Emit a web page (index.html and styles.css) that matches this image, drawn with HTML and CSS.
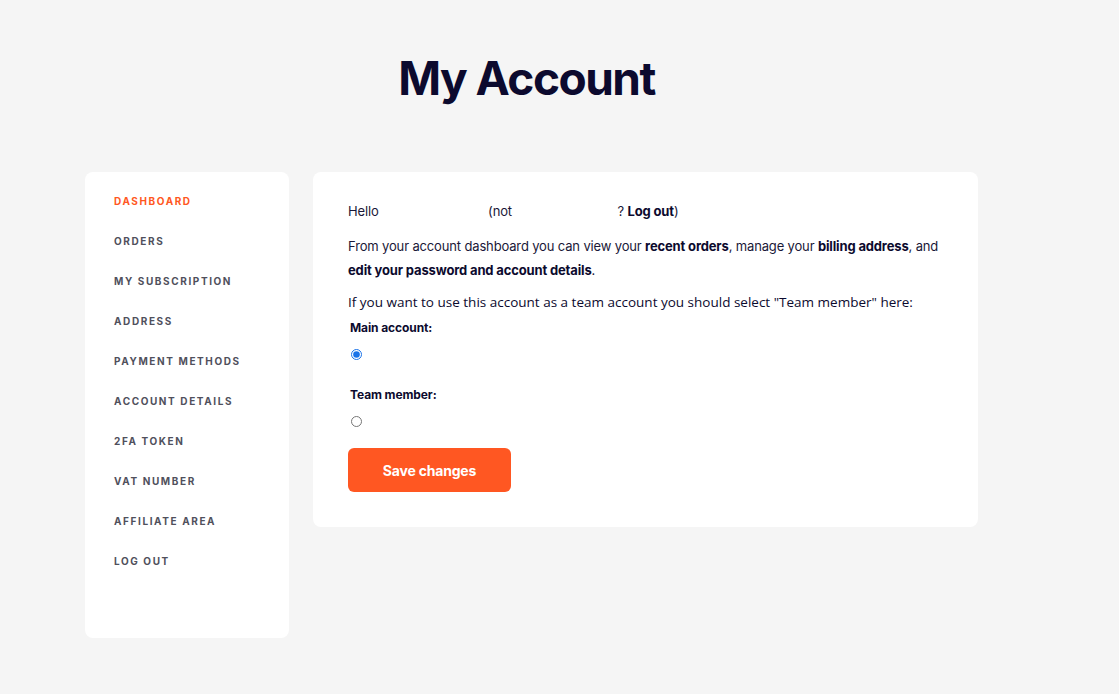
FILE: index.html
```html
<!DOCTYPE html>
<html lang="en">
<head>
<meta charset="utf-8">
<title>My Account</title>
<link rel="stylesheet" href="styles.css">
</head>
<body>
<div class="page">
  <h1 class="title">My Account</h1>
  <div class="layout">
    <nav class="sidebar">
      <a class="nav-item active" href="#">Dashboard</a>
      <a class="nav-item" href="#">Orders</a>
      <a class="nav-item" href="#">My Subscription</a>
      <a class="nav-item" href="#">Address</a>
      <a class="nav-item" href="#">Payment Methods</a>
      <a class="nav-item" href="#">Account Details</a>
      <a class="nav-item" href="#">2FA Token</a>
      <a class="nav-item" href="#">VAT Number</a>
      <a class="nav-item" href="#">Affiliate Area</a>
      <a class="nav-item" href="#">Log Out</a>
    </nav>
    <main class="content">
      <p class="hello">Hello <span class="blank-a"></span>(not <span class="blank-b"></span>? <strong>Log out</strong>)</p>
      <p class="intro">From your account dashboard you can view your <strong>recent orders</strong>, manage your <strong>billing address</strong>, and <strong>edit your password and account details</strong>.</p>
      <p class="team-note">If you want to use this account as a team account you should select "Team member" here:</p>
      <div class="option">
        <label class="option-label" for="main">Main account:</label>
        <input class="radio" type="radio" id="main" name="acct" checked>
      </div>
      <div class="option second">
        <label class="option-label" for="team">Team member:</label>
        <input class="radio" type="radio" id="team" name="acct">
      </div>
      <button class="save" type="button">Save changes</button>
    </main>
  </div>
</div>
</body>
</html>
```
FILE: styles.css
```css
* { box-sizing: border-box; }
html, body { margin: 0; padding: 0; }
body {
  background: #f5f5f5;
  font-family: "Inter", "Noto Sans", sans-serif;
  color: #0c0a2e;
  width: 1119px;
  height: 694px;
  overflow: hidden;
}
.page {
  padding: 0 0 0 85px;
}
.title {
  margin: 0;
  width: 893px;
  padding: 51px 10px 0 0;
  height: 172px;
  text-align: center;
  font-size: 46px;
  font-weight: 700;
  letter-spacing: -1.5px;
  line-height: 54px;
  color: #0c0a2e;
}
.layout {
  display: flex;
  gap: 24px;
  align-items: flex-start;
}
.sidebar {
  width: 204px;
  height: 466px;
  background: #fff;
  border-radius: 8px;
  padding: 21px 0 0 29px;
  display: flex;
  flex-direction: column;
}
.nav-item {
  display: block;
  height: 40px;
  line-height: 16px;
  font-size: 10px;
  font-weight: 700;
  letter-spacing: 1.6px;
  text-transform: uppercase;
  color: #50505c;
  text-decoration: none;
}
.nav-item.active { color: #ff5722; }
.content {
  width: 665px;
  background: #fff;
  border-radius: 8px;
  padding: 27px 35px 35px 35px;
  font-size: 13px;
  letter-spacing: -0.15px;
  line-height: 24px;
  color: #1a1838;
}
.content p { margin: 0; }
.content strong { color: #0c0a2e; font-weight: 700; }
.hello { margin-bottom: 11px !important; }
.blank-a { display: inline-block; width: 106px; }
.blank-b { display: inline-block; width: 102px; }
.intro { margin-bottom: 8px !important; }
.team-note {
  font-family: "Open Sans", "Noto Sans", sans-serif;
  font-size: 13.5px;
  letter-spacing: 0;
  color: #0c0a2e;
}
.option { display: flex; flex-direction: column; align-items: flex-start; padding-left: 2px; }
.option-label {
  font-size: 12px;
  font-weight: 700;
  line-height: 26px;
  letter-spacing: -0.1px;
  color: #0c0a2e;
  margin-top: 1px;
}
.radio {
  margin: 8px 0 0 1px;
  width: 11px;
  height: 11px;
  accent-color: #1a73e8;
}
.option.second { margin-top: 21px; }
.option.second .radio { margin-top: 8px; }
.save {
  margin-top: 21px;
  width: 163px;
  height: 44px;
  border: 0;
  border-radius: 6px;
  background: #ff5722;
  color: #fff;
  font-family: "Inter", "Noto Sans", sans-serif;
  font-size: 14px;
  font-weight: 700;
  letter-spacing: -0.2px;
  cursor: pointer;
}
```
